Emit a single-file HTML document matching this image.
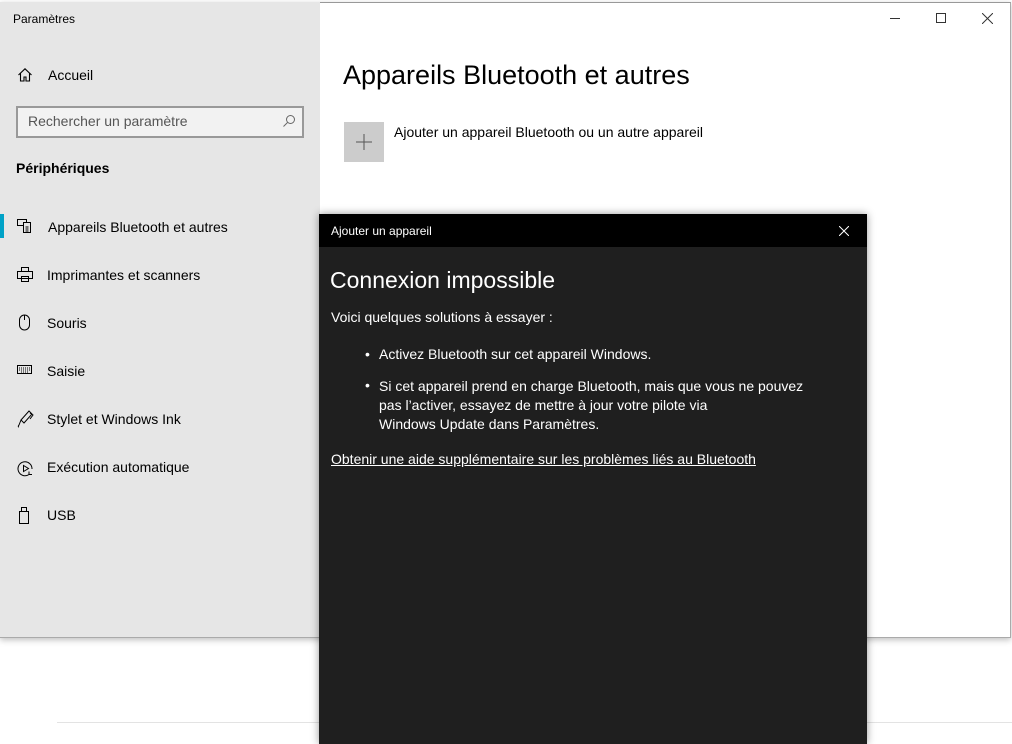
<!DOCTYPE html>
<html><head><meta charset="utf-8"><style>
*{margin:0;padding:0;box-sizing:border-box}
body{width:1012px;height:741px;background:#fff;position:relative;overflow:hidden;font-family:"Liberation Sans",sans-serif;color:#000}
.win{position:absolute;left:0;top:2px;width:1011px;height:636px;background:#fff;border:1px solid #aaa;border-top:1px solid #999;box-shadow:0 2px 6px rgba(0,0,0,.25)}
.side{position:absolute;left:-1px;top:-1px;width:320px;height:635px;background:#e6e6e6}
.t{position:absolute;font-size:14px;white-space:nowrap}
.ic{position:absolute;left:17px}
.dlg{position:absolute;left:319px;top:214px;width:548px;height:530px;background:#1f1f1f;box-shadow:0 0 8px rgba(0,0,0,.4);color:#fff}
.dlg .bar{height:33px;background:#000}
.w{color:#fff}
</style></head><body>
<div style="position:absolute;left:57px;top:722px;width:955px;height:1px;background:#e3e3e3"></div>
<div class="win">
 <div class="side">
  <div class="t" style="left:13px;top:10px;font-size:12px">Paramètres</div>
  <svg class="ic" style="top:65px" width="16" height="16" viewBox="0 0 16 16" fill="none" stroke="#000" stroke-width="1.1"><path d="M1.5 8L8 1.8 14.5 8M3.5 6.2V14h3.5v-4h2v4h3.5V6.2"/></svg>
  <div class="t" style="left:48px;top:65px">Accueil</div>
  <div style="position:absolute;left:16px;top:104px;width:288px;height:32px;border:2px solid #999;background:#f2f2f2"></div>
  <div class="t" style="left:28px;top:111px;color:#555">Rechercher un paramètre</div>
  <svg style="position:absolute;left:282px;top:112px" width="14" height="14" viewBox="0 0 14 14" fill="none" stroke="#666"><circle cx="8.5" cy="5.5" r="4"/><path d="M5.5 8.5L1.5 12.5"/></svg>
  <div class="t" style="left:16px;top:158px;font-weight:bold">Périphériques</div>
  <div style="position:absolute;left:0;top:212px;width:4px;height:24px;background:#00a2c7"></div>
  <svg class="ic" style="top:216px" width="16" height="16" viewBox="0 0 16 16" fill="none" stroke="#000"><rect x="0.5" y="1.5" width="9" height="6"/><rect x="6.5" y="4.5" width="7" height="10" fill="#e6e6e6"/><path d="M8.5 9h3M8.5 11h3M8.5 13h3"/></svg>
  <div class="t" style="left:48px;top:217px">Appareils Bluetooth et autres</div>
  <svg class="ic" style="top:265px" width="17" height="16" viewBox="0 0 17 16" fill="none" stroke="#000"><rect x="4.5" y="0.5" width="7" height="4"/><rect x="0.5" y="4.5" width="15" height="7"/><rect x="4.5" y="9.5" width="7" height="5"/></svg>
  <div class="t" style="left:47px;top:265px">Imprimantes et scanners</div>
  <svg class="ic" style="top:312px" width="16" height="18" viewBox="0 0 16 18" fill="none" stroke="#000"><rect x="2.5" y="1" width="10" height="15" rx="5"/><path d="M7.5 1v5"/></svg>
  <div class="t" style="left:47px;top:313px">Souris</div>
  <svg class="ic" style="top:363px" width="16" height="10" viewBox="0 0 16 10" fill="none" stroke="#000"><rect x="0.5" y="0.5" width="14" height="8"/><path d="M2 3h11M2 5h11M4 7h7" stroke-dasharray="1 1"/></svg>
  <div class="t" style="left:47px;top:361px">Saisie</div>
  <svg class="ic" style="top:408px" width="17" height="18" viewBox="0 0 17 18" fill="none" stroke="#000"><path d="M12 1l3 3-8 9-3-3zM4 10l-2 5c-1 1-1 2 0 2M13 3l3 2-3 4"/></svg>
  <div class="t" style="left:47px;top:409px">Stylet et Windows Ink</div>
  <svg class="ic" style="top:458px" width="17" height="17" viewBox="0 0 17 17" fill="none" stroke="#000"><path d="M12 14.5A7 7 0 1 1 15 9M12 14.5h3M12 14.5v-3"/><path d="M6.5 5.5v6l5-3z"/></svg>
  <div class="t" style="left:47px;top:457px">Exécution automatique</div>
  <svg class="ic" style="top:505px" width="14" height="18" viewBox="0 0 14 18" fill="none" stroke="#000"><rect x="4.5" y="0.5" width="5" height="4"/><rect x="2.5" y="4.5" width="9" height="12"/></svg>
  <div class="t" style="left:47px;top:505px">USB</div>
 </div>
 <div style="position:absolute;left:889px;top:15px;width:10px;height:1px;background:#333"></div>
 <div style="position:absolute;left:935px;top:10px;width:10px;height:10px;border:1px solid #333"></div>
 <svg style="position:absolute;left:981px;top:10px" width="11" height="11" viewBox="0 0 11 11" stroke="#333"><path d="M0 0L11 11M11 0L0 11"/></svg>
 <div class="t" style="left:342px;top:57px;font-size:27px">Appareils Bluetooth et autres</div>
 <div style="position:absolute;left:343px;top:119px;width:40px;height:40px;background:#ccc"></div>
 <svg style="position:absolute;left:355px;top:131px" width="16" height="16" stroke="#555"><path d="M8 0v16M0 8h16"/></svg>
 <div class="t" style="left:393px;top:121px">Ajouter un appareil Bluetooth ou un autre appareil</div>
</div>
<div class="dlg">
 <div class="bar"></div>
 <div class="t w" style="left:12px;top:10px;font-size:12px">Ajouter un appareil</div>
 <svg style="position:absolute;left:520px;top:12px" width="10" height="10" viewBox="0 0 10 10" stroke="#fff"><path d="M0 0L10 10M10 0L0 10"/></svg>
 <div class="t w" style="left:11px;top:53px;font-size:23px">Connexion impossible</div>
 <div class="t w" style="left:12px;top:95px">Voici quelques solutions à essayer :</div>
 <div class="t w" style="left:46px;top:132px">•</div>
 <div class="t w" style="left:60px;top:132px">Activez Bluetooth sur cet appareil Windows.</div>
 <div class="t w" style="left:46px;top:163px">•</div>
 <div class="t w" style="left:60px;top:163px;line-height:19px">Si cet appareil prend en charge Bluetooth, mais que vous ne pouvez<br>pas l’activer, essayez de mettre à jour votre pilote via<br>Windows Update dans Paramètres.</div>
 <div class="t w" style="left:12px;top:237px;text-decoration:underline">Obtenir une aide supplémentaire sur les problèmes liés au Bluetooth</div>
</div>
</body></html>
